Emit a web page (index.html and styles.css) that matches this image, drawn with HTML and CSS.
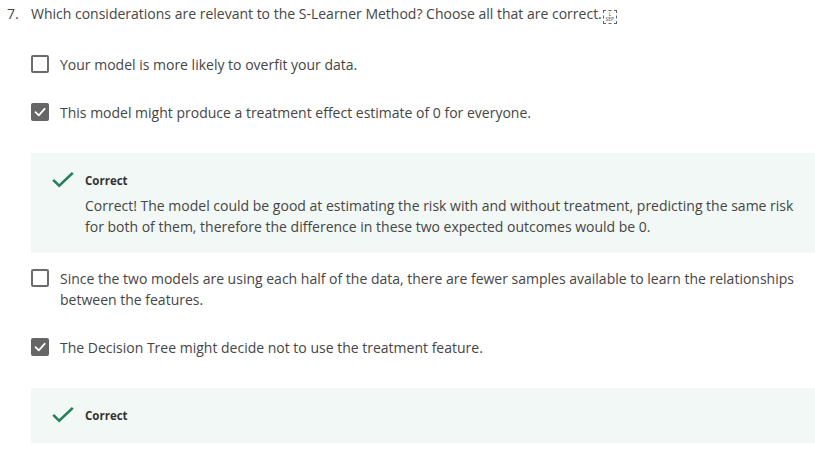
FILE: index.html
```html
<!DOCTYPE html>
<html>
<head>
<meta charset="utf-8">
<link rel="stylesheet" href="styles.css">
</head>
<body>
<div class="question">
  <div class="q-head">
    <span class="q-num">7.</span>
    <span class="q-text">Which considerations are relevant to the S-Learner Method? Choose all that are correct.<span class="sep-glyph"><span>L</span><span>SEP</span></span></span>
  </div>
  <div class="options">
    <div class="option">
      <span class="box"></span>
      <span class="opt-text">Your model is more likely to overfit your data.</span>
    </div>
    <div class="option">
      <span class="box checked"><svg viewBox="0 0 18 18" width="18" height="18"><path d="M4.5 9.2 L7.8 12.4 L13.6 5.8" fill="none" stroke="#fff" stroke-width="1.8" stroke-linecap="round" stroke-linejoin="round"/></svg></span>
      <span class="opt-text">This model might produce a treatment effect estimate of 0 for everyone.</span>
    </div>
    <div class="feedback with-text">
      <svg class="fb-icon" viewBox="0 0 22 16" width="22" height="16"><path d="M1.2 7.8 L7.2 13.8 L20.8 0.9" fill="none" stroke="#22805a" stroke-width="2.6"/></svg>
      <div class="fb-body">
        <div class="fb-label">Correct</div>
        <div class="fb-text">Correct! The model could be good at estimating the risk with and without treatment, predicting the same risk for both of them, therefore the difference in these two expected outcomes would be 0.</div>
      </div>
    </div>
    <div class="option">
      <span class="box"></span>
      <span class="opt-text">Since the two models are using each half of the data, there are fewer samples available to learn the relationships between the features.</span>
    </div>
    <div class="option">
      <span class="box checked"><svg viewBox="0 0 18 18" width="18" height="18"><path d="M4.5 9.2 L7.8 12.4 L13.6 5.8" fill="none" stroke="#fff" stroke-width="1.8" stroke-linecap="round" stroke-linejoin="round"/></svg></span>
      <span class="opt-text">The Decision Tree might decide not to use the treatment feature.</span>
    </div>
    <div class="feedback">
      <svg class="fb-icon" viewBox="0 0 22 16" width="22" height="16"><path d="M1.2 7.8 L7.2 13.8 L20.8 0.9" fill="none" stroke="#22805a" stroke-width="2.6"/></svg>
      <div class="fb-body">
        <div class="fb-label">Correct</div>
      </div>
    </div>
  </div>
</div>
</body>
</html>
```
FILE: styles.css
```css
html, body {
  margin: 0;
  padding: 0;
  background: #fff;
}
body {
  font-family: "Open Sans", "Liberation Sans", sans-serif;
  font-size: 14px;
  color: #454545;
}
.question {
  padding: 4px 0 0 7px;
}
.q-head {
  display: flex;
  line-height: 20px;
}
.q-num {
  width: 24px;
  flex: none;
}
.sep-glyph {
  display: inline-flex;
  flex-direction: column;
  align-items: center;
  justify-content: center;
  width: 12px;
  height: 12px;
  border: 1px dashed #666;
  font-size: 5px;
  line-height: 5px;
  margin-left: 1px;
  vertical-align: 3px;
  color: #555;
}
.options {
  margin: 30px 0 0 24px;
  display: flex;
  flex-direction: column;
}
.option {
  display: flex;
  align-items: flex-start;
  gap: 11px;
  line-height: 21px;
  padding-right: 20px;
  margin-bottom: 27px;
}
.box {
  flex: none;
  width: 18px;
  height: 18px;
  box-sizing: border-box;
  border: 2px solid #6b6b6b;
  border-radius: 2px;
  margin-top: 1px;
  position: relative;
}
.box.checked {
  background: #666;
  border-color: #666;
}
.box.checked svg {
  position: absolute;
  left: -2px;
  top: -2px;
}
.option + .feedback {
  margin-top: 3px;
}
.feedback {
  background: #f2f8f6;
  display: flex;
  align-items: flex-start;
  gap: 11px;
  padding: 19px 20px 18px 21px;
}
.feedback.with-text {
  padding-bottom: 16px;
  margin-bottom: 15px;
}
.fb-icon {
  flex: none;
}
.fb-label {
  font-size: 11.5px;
  font-weight: 700;
  line-height: 18px;
  color: #333;
}
.fb-text {
  margin-top: 5px;
  line-height: 21px;
  font-size: 14px;
}
```
